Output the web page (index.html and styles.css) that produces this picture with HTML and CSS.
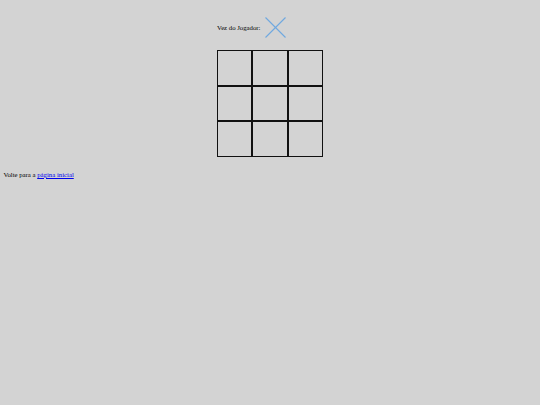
FILE: index.html
```html
<!DOCTYPE html>
<html lang="pt">
<head>
<meta charset="utf-8">
<title>Jogo da Velha</title>
<link rel="stylesheet" href="styles.css">
</head>
<body>
<main class="game">
  <div class="turn">
    <span class="turn-label">Vez do Jogador:</span>
    <svg class="turn-icon" width="21" height="21" viewBox="0 0 21 21" aria-hidden="true">
      <line x1="0.5" y1="0.5" x2="20.5" y2="20.5"/>
      <line x1="20.5" y1="0.5" x2="0.5" y2="20.5"/>
    </svg>
  </div>
  <div class="board">
    <div class="cell"></div><div class="cell"></div><div class="cell"></div>
    <div class="cell"></div><div class="cell"></div><div class="cell"></div>
    <div class="cell"></div><div class="cell"></div><div class="cell"></div>
  </div>
</main>
<p class="back">Volte para a <a href="#">página inicial</a></p>
</body>
</html>
```
FILE: styles.css
```css
html, body {
  background: #d3d3d3;
}
body {
  margin: 3.4px;
  font-family: "Liberation Serif", "Times New Roman", serif;
  font-size: 6.75px;
  color: #000;
}
.game {
  width: 106px;
  margin: 0 auto;
  padding-top: 13.6px;
}
.turn {
  display: flex;
  align-items: center;
  gap: 4px;
  height: 21px;
}
.turn-icon line {
  stroke: #6ea8df;
  stroke-width: 1.1;
}
.board {
  display: grid;
  grid-template-columns: repeat(3, 35.33px);
  grid-template-rows: repeat(3, 35.67px);
  margin-top: 12px;
}
.cell {
  border: 1px solid #111;
}
.back {
  margin: 14px 0 0;
  line-height: 8px;
}
.back a {
  color: #0000ee;
}
```
